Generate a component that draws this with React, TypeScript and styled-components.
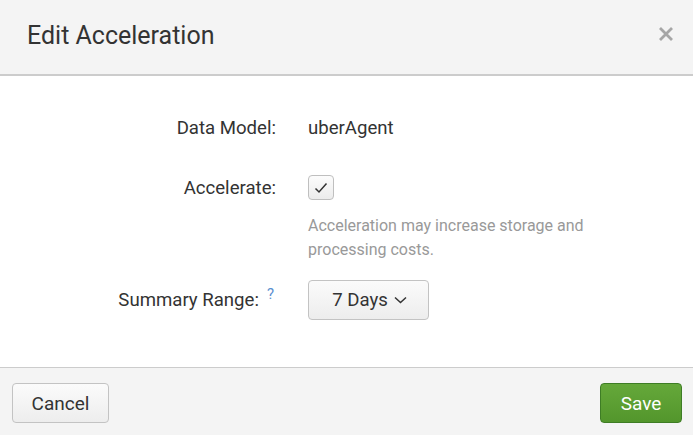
import React, { useState } from "react";
import styled, { createGlobalStyle } from "styled-components";

const GlobalStyle = createGlobalStyle`
  html, body {
    margin: 0;
    padding: 0;
    background: #ffffff;
  }
  body {
    font-family: Roboto, "Liberation Sans", Arial, sans-serif;
    color: #333333;
  }
`;

const App = () => {
  const [accelerate, setAccelerate] = useState(true);

  return (
    <>
      <GlobalStyle />
      <Modal>
        <Header>
          <Title>Edit Acceleration</Title>
          <CloseButton aria-label="Close">
            <svg width="16" height="16" viewBox="0 0 16 16">
              <path d="M2 2 L14 14 M14 2 L2 14" stroke="#a6a6a6" strokeWidth="2.8" />
            </svg>
          </CloseButton>
        </Header>
        <Body>
          <Row>
            <Label>Data Model:</Label>
            <Value>uberAgent</Value>
          </Row>
          <Row $gap={35}>
            <Label>Accelerate:</Label>
            <Checkbox onClick={() => setAccelerate(!accelerate)} aria-checked={accelerate}>
              {accelerate && (
                <svg width="14" height="12" viewBox="0 0 14 12">
                  <path d="M1.5 6.5 L5 10 L12.5 1.5" fill="none" stroke="#333" strokeWidth="1.5" />
                </svg>
              )}
            </Checkbox>
          </Row>
          <HelpRow>
            <span />
            <HelpText>Acceleration may increase storage and processing costs.</HelpText>
          </HelpRow>
          <Row $gap={18}>
            <Label>
              Summary Range:<HelpLink>?</HelpLink>
            </Label>
            <Dropdown>
              7 Days
              <svg width="13" height="8" viewBox="0 0 13 8">
                <path d="M1 1.5 L6.5 6.5 L12 1.5" fill="none" stroke="#333" strokeWidth="1.5" />
              </svg>
            </Dropdown>
          </Row>
        </Body>
        <Footer>
          <CancelButton>Cancel</CancelButton>
          <SaveButton>Save</SaveButton>
        </Footer>
      </Modal>
    </>
  );
};

export default App;

const Modal = styled.div`
  width: 693px;
  height: 435px;
  display: flex;
  flex-direction: column;
  background: #ffffff;
  overflow: hidden;
`;
const Header = styled.div`
  height: 76px;
  flex-shrink: 0;
  display: flex;
  align-items: center;
  justify-content: space-between;
  padding: 0 19px 0 27px;
  box-sizing: border-box;
  background: #f4f4f4;
  border-bottom: 2px solid #cccccc;
`;
const Title = styled.h3`
  margin: -4px 0 0;
  font-size: 25px;
  font-weight: 400;
  color: #333333;
`;
const CloseButton = styled.button`
  border: none;
  background: none;
  padding: 0;
  margin-top: -6px;
  display: flex;
  cursor: pointer;
`;
const Body = styled.div`
  flex: 1;
  padding-top: 40px;
  display: flex;
  flex-direction: column;
`;
const Row = styled.div<{ $gap?: number }>`
  display: grid;
  grid-template-columns: 276px 1fr;
  column-gap: 32px;
  align-items: center;
  margin-top: ${({ $gap }) => $gap || 0}px;
`;
const HelpRow = styled(Row)`
  margin-top: 14px;
`;
const Label = styled.div`
  text-align: right;
  font-size: 18.6px;
  line-height: 24px;
  color: #333333;
  white-space: nowrap;
`;
const Value = styled.div`
  font-size: 18.6px;
  line-height: 24px;
  color: #333333;
`;
const HelpLink = styled.sup`
  color: #5b8fd0;
  font-size: 15px;
  margin-left: 8px;
  margin-right: 2px;
  vertical-align: 7px;
  line-height: 0;
`;
const Checkbox = styled.button`
  width: 26px;
  height: 25px;
  box-sizing: border-box;
  border: 1px solid #bfbfbf;
  border-radius: 4px;
  background: linear-gradient(#fcfcfc, #ececec);
  display: flex;
  align-items: center;
  justify-content: center;
  padding: 0;
  cursor: pointer;
`;
const HelpText = styled.div`
  width: 300px;
  font-size: 16px;
  line-height: 24px;
  color: #999999;
`;
const Dropdown = styled.button`
  justify-self: start;
  width: 121px;
  height: 40px;
  box-sizing: border-box;
  border: 1px solid #c3c3c3;
  border-radius: 4px;
  background: linear-gradient(#fbfbfb, #ededed);
  font-family: inherit;
  font-size: 18.6px;
  color: #333333;
  display: flex;
  align-items: center;
  justify-content: center;
  gap: 6px;
  padding: 0 0 0 2px;
  cursor: pointer;
`;
const Footer = styled.div`
  height: 68px;
  flex-shrink: 0;
  box-sizing: border-box;
  border-top: 1px solid #cccccc;
  background: #f4f4f4;
  display: flex;
  align-items: center;
  justify-content: space-between;
  padding: 3px 11px 0 12px;
`;
const BaseButton = styled.button`
  height: 40px;
  box-sizing: border-box;
  border-radius: 4px;
  font-family: inherit;
  font-size: 19px;
  cursor: pointer;
`;
const CancelButton = styled(BaseButton)`
  width: 97px;
  border: 1px solid #c3c3c3;
  background: linear-gradient(#fbfbfb, #ededed);
  color: #333333;
`;
const SaveButton = styled(BaseButton)`
  width: 82px;
  border: 1px solid #3e7d25;
  background: linear-gradient(#65a83a, #53962c);
  color: #ffffff;
`;
